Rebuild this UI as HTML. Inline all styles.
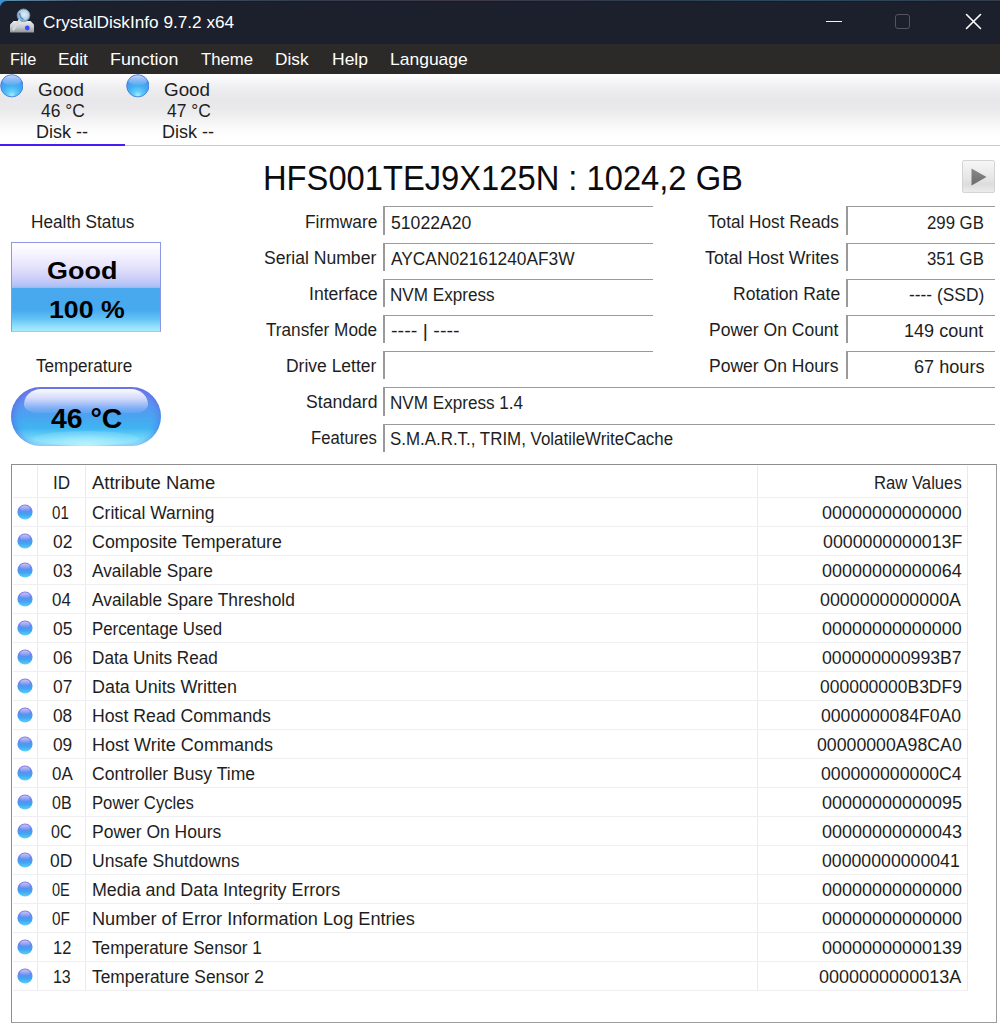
<!DOCTYPE html>
<html><head><meta charset="utf-8"><title>CrystalDiskInfo</title>
<style>
html,body{margin:0;padding:0}
body{width:1000px;height:1026px;position:relative;overflow:hidden;background:#fff;font-family:"Liberation Sans",sans-serif;color:#000}
.t{position:absolute;white-space:nowrap;line-height:1;transform-origin:0 0}
.b{position:absolute}
.fld{position:absolute;border-top:1.8px solid #9a9a9a;border-left:2px solid #9a9a9a;box-sizing:border-box;background:#fff}
.hl{position:absolute;height:1px;background:#efeff2;left:13px;width:954px}
.vl{position:absolute;width:1px;background:#e9e9ee;top:466px;height:525px}
</style></head><body>

<div class="b" style="left:0;top:0;width:1000px;height:10px;background:linear-gradient(90deg,#3f8fd6 0,#5b8aa8 1.2%,#46596c 8%,#343e4e 30%,#40394a 47%,#323c4c 60%,#2c4a60 80%,#343e4e 100%)"></div>
<div class="b" style="left:0;top:1px;width:1000px;height:43px;background:#1b202c;border-top-left-radius:7px;border-top:1px solid #141c28;box-sizing:border-box"></div>
<div class="b" style="left:0;top:44px;width:1000px;height:30px;background:#2b2a29"></div>
<svg class="b" style="left:8px;top:7px" width="30" height="30" viewBox="0 0 30 30">
<defs><linearGradient id="ig" x1="0" y1="0" x2="0" y2="1"><stop offset="0" stop-color="#eceef0"/><stop offset="0.55" stop-color="#c4c8cc"/><stop offset="1" stop-color="#8e949c"/></linearGradient>
<radialGradient id="il" cx="0.55" cy="0.45" r="0.6"><stop offset="0" stop-color="#e6edf3"/><stop offset="0.6" stop-color="#b9cfe2"/><stop offset="1" stop-color="#5b93c4"/></radialGradient></defs>
<path d="M5.5 14 L22.5 14 L26 17.5 L26 25.6 L2 25.6 L2 17.5 Z" fill="url(#ig)"/>
<circle cx="15.5" cy="8.3" r="6.3" fill="url(#il)" stroke="#6c9cc6" stroke-width="0.9"/>
<path d="M11.5 6 Q12 11 15.5 12.5" stroke="#3f7fb8" stroke-width="1.6" fill="none" opacity=".8"/>
<path d="M11.2 13.2 L5.5 22.5" stroke="#d6dadd" stroke-width="2.2" stroke-linecap="round"/>
<circle cx="19.3" cy="21" r="2.4" fill="#3d48ff"/>
</svg>
<div class="t" id="title" style="left:43.39px;top:14px;font-size:17px;color:#fff;transform:scaleX(1.0117);">CrystalDiskInfo 9.7.2 x64</div>
<div class="b" style="left:826px;top:20.5px;width:15.5px;height:1.4px;background:#f4f4f4"></div>
<div class="b" style="left:895px;top:14px;width:15px;height:15px;border:1.5px solid #50555f;border-radius:3px;box-sizing:border-box"></div>
<svg class="b" style="left:965px;top:13px" width="17" height="17" viewBox="0 0 17 17"><path d="M1.5 1.5 L15.5 15.5 M15.5 1.5 L1.5 15.5" stroke="#fff" stroke-width="1.6" stroke-linecap="round"/></svg>
<div class="t" id="m_File" style="left:9.99px;top:51px;font-size:17px;color:#fff;transform:scaleX(0.9612);">File</div>
<div class="t" id="m_Edit" style="left:58.18px;top:51px;font-size:17px;color:#fff;transform:scaleX(1.0220);">Edit</div>
<div class="t" id="m_Function" style="left:110.14px;top:51px;font-size:17px;color:#fff;transform:scaleX(1.0493);">Function</div>
<div class="t" id="m_Theme" style="left:201.18px;top:51px;font-size:17px;color:#fff;transform:scaleX(0.9832);">Theme</div>
<div class="t" id="m_Disk" style="left:275.19px;top:51px;font-size:17px;color:#fff;transform:scaleX(1.0159);">Disk</div>
<div class="t" id="m_Help" style="left:331.99px;top:51px;font-size:17px;color:#fff;transform:scaleX(1.0294);">Help</div>
<div class="t" id="m_Language" style="left:390.16px;top:51px;font-size:17px;color:#fff;transform:scaleX(1.0284);">Language</div>
<div class="b" style="left:0;top:74px;width:1000px;height:71px;background:linear-gradient(180deg,#ffffff 0,#f7f7f8 9%,#ededef 22%,#e8e8ea 36%,#e9e9eb 48%,#f1f1f2 62%,#fafafa 76%,#ffffff 90%,#ffffff 100%)"></div>
<div class="b" style="left:0;top:144.5px;width:1000px;height:1.5px;background:#cbcbcb"></div>
<div class="b" style="left:0;top:143.5px;width:125px;height:2.5px;background:#4a1cf5"></div>
<svg class="b" style="left:-0.4px;top:74.1px" width="23.6" height="23.6" viewBox="0 0 24 24">
<defs><radialGradient id="o1a" cx="0.5" cy="0.92" r="0.85"><stop offset="0" stop-color="#a6ecff"/><stop offset="0.22" stop-color="#62cdf8"/><stop offset="0.5" stop-color="#45b0f2"/><stop offset="1" stop-color="#4a8cec"/></radialGradient>
<linearGradient id="o1b" x1="0" y1="0" x2="0" y2="1"><stop offset="0" stop-color="#f4eeff" stop-opacity="0.95"/><stop offset="0.55" stop-color="#e0e6ff" stop-opacity="0.45"/><stop offset="1" stop-color="#ffffff" stop-opacity="0"/></linearGradient>
<clipPath id="o1c"><circle cx="12" cy="12" r="10.8"/></clipPath></defs>
<circle cx="12" cy="12" r="11.3" fill="url(#o1a)" stroke="#3f7cdc" stroke-width="0.9"/><ellipse cx="12" cy="5.2" rx="10.5" ry="6.6" fill="url(#o1b)" clip-path="url(#o1c)"/></svg>
<svg class="b" style="left:125.6px;top:74.1px" width="23.6" height="23.6" viewBox="0 0 24 24">
<defs><radialGradient id="o2a" cx="0.5" cy="0.92" r="0.85"><stop offset="0" stop-color="#a6ecff"/><stop offset="0.22" stop-color="#62cdf8"/><stop offset="0.5" stop-color="#45b0f2"/><stop offset="1" stop-color="#4a8cec"/></radialGradient>
<linearGradient id="o2b" x1="0" y1="0" x2="0" y2="1"><stop offset="0" stop-color="#f4eeff" stop-opacity="0.95"/><stop offset="0.55" stop-color="#e0e6ff" stop-opacity="0.45"/><stop offset="1" stop-color="#ffffff" stop-opacity="0"/></linearGradient>
<clipPath id="o2c"><circle cx="12" cy="12" r="10.8"/></clipPath></defs>
<circle cx="12" cy="12" r="11.3" fill="url(#o2a)" stroke="#3f7cdc" stroke-width="0.9"/><ellipse cx="12" cy="5.2" rx="10.5" ry="6.6" fill="url(#o2b)" clip-path="url(#o2c)"/></svg>
<div class="t" id="tb0a" style="left:38.14px;top:82px;font-size:17.5px;color:#1e1e1e;transform:scaleX(1.0758);">Good</div>
<div class="t" id="tb0b" style="left:40.58px;top:103px;font-size:17.5px;color:#1e1e1e;transform:scaleX(0.9960);">46 °C</div>
<div class="t" id="tb0c" style="left:35.58px;top:124px;font-size:17.5px;color:#1e1e1e;transform:scaleX(1.0286);">Disk --</div>
<div class="t" id="tb1a" style="left:164.14px;top:82px;font-size:17.5px;color:#1e1e1e;transform:scaleX(1.0758);">Good</div>
<div class="t" id="tb1b" style="left:166.58px;top:103px;font-size:17.5px;color:#1e1e1e;transform:scaleX(0.9960);">47 °C</div>
<div class="t" id="tb1c" style="left:161.58px;top:124px;font-size:17.5px;color:#1e1e1e;transform:scaleX(1.0286);">Disk --</div>
<div class="t" id="model" style="left:263.16px;top:160px;font-size:35px;color:#0c0c0c;transform:scaleX(0.9343);">HFS001TEJ9X125N : 1024,2 GB</div>
<div class="b" style="left:962px;top:160px;width:33px;height:33px;box-sizing:border-box;border:1px solid #d4d4d4;border-radius:2px;background:linear-gradient(180deg,#f6f6f6 0,#e6e6e6 55%,#dcdcdc 75%,#ececec 100%)"></div>
<svg class="b" style="left:962px;top:160px" width="33" height="33" viewBox="0 0 33 33"><defs><linearGradient id="pg" x1="0" y1="0" x2="0" y2="1"><stop offset="0" stop-color="#8a8a8a"/><stop offset="1" stop-color="#6a6a6a"/></linearGradient></defs><path d="M9.5 8.5 L24.5 17 L9.5 25.5 Z" fill="url(#pg)"/></svg>
<div class="t" id="hs" style="left:31.02px;top:214px;font-size:17.5px;color:#1e1e1e;transform:scaleX(0.9837);">Health Status</div>
<div class="b" style="left:11.2px;top:242.3px;width:149.6px;height:89.3px;box-sizing:border-box;border:1px solid #8d97e4;border-bottom-color:#86d4f6;background:linear-gradient(180deg,#ffffff 0,#f6f4ff 12%,#e4e1fc 28%,#cccef9 40%,#b3c3f7 48%,#9dbef5 50.5%,#49a8ee 51.5%,#47a9ef 76%,#62c2f5 86%,#94e0fb 95%,#a8eaff 100%)"></div>
<div class="t" id="good" style="left:46.74px;top:259px;font-size:24px;color:#000;font-weight:bold;transform:scaleX(1.1231);">Good</div>
<div class="t" id="pct" style="left:49.41px;top:298px;font-size:24px;color:#000;font-weight:bold;transform:scaleX(1.1121);">100 %</div>
<div class="t" id="tl" style="left:36.00px;top:358px;font-size:17.5px;color:#1e1e1e;transform:scaleX(0.9796);">Temperature</div>
<div class="b" style="left:11px;top:386.5px;width:150px;height:59.5px;border-radius:30px;background:linear-gradient(180deg,#7078e6 0,#6a82ec 10%,#5a96f0 30%,#48a6f0 52%,#40b4f2 70%,#6fd6f8 86%,#a6eefe 100%);overflow:hidden">
<div style="position:absolute;left:0;top:0;width:150px;height:59.5px;border-radius:30px;box-shadow:inset 5px 0 7px -3px rgba(90,100,230,.75),inset -5px 0 7px -3px rgba(90,100,230,.6)"></div>
<div style="position:absolute;left:13px;top:2.5px;width:124px;height:24px;border-radius:20px 20px 16px 16px / 18px 18px 10px 10px;background:linear-gradient(180deg,rgba(255,255,255,.97) 0,rgba(238,238,255,.8) 40%,rgba(205,215,255,.35) 80%,rgba(190,210,255,.12) 100%)"></div>
<div style="position:absolute;left:22px;top:44px;width:106px;height:15px;border-radius:50%;background:radial-gradient(ellipse at 50% 90%,rgba(190,246,255,.85) 0,rgba(170,236,255,.35) 55%,rgba(160,230,255,0) 100%)"></div></div>
<div class="t" id="temp" style="left:50.59px;top:404px;font-size:28.5px;color:#000;font-weight:bold;transform:scaleX(0.9972);">46 °C</div>
<div class="fld" style="left:383.25px;top:206.3px;width:269.6px;height:28.3px"></div>
<div class="t" id="l0" style="left:305.19px;top:214px;font-size:17.5px;color:#1e1e1e;transform:scaleX(0.9932);">Firmware</div>
<div class="t" id="v0" style="left:391.19px;top:215px;font-size:17.5px;color:#1e1e1e;transform:scaleX(1.0064);">51022A20</div>
<div class="fld" style="left:383.25px;top:242.5px;width:269.6px;height:28.3px"></div>
<div class="t" id="l1" style="left:264.00px;top:250px;font-size:17.5px;color:#1e1e1e;transform:scaleX(1.0036);">Serial Number</div>
<div class="t" id="v1" style="left:391.19px;top:251px;font-size:17.5px;color:#1e1e1e;transform:scaleX(0.9898);">AYCAN02161240AF3W</div>
<div class="fld" style="left:383.25px;top:278.7px;width:269.6px;height:28.3px"></div>
<div class="t" id="l2" style="left:308.99px;top:286px;font-size:17.5px;color:#1e1e1e;transform:scaleX(1.0061);">Interface</div>
<div class="t" id="v2" style="left:390.21px;top:287px;font-size:17.5px;color:#1e1e1e;transform:scaleX(0.9774);">NVM Express</div>
<div class="fld" style="left:383.25px;top:314.9px;width:269.6px;height:28.3px"></div>
<div class="t" id="l3" style="left:265.99px;top:322px;font-size:17.5px;color:#1e1e1e;transform:scaleX(0.9814);">Transfer Mode</div>
<div class="t" id="v3" style="left:391.11px;top:323px;font-size:17.5px;color:#1e1e1e;transform:scaleX(1.1268);">---- | ----</div>
<div class="fld" style="left:383.25px;top:351.1px;width:269.6px;height:28.3px"></div>
<div class="t" id="l4" style="left:286.00px;top:358px;font-size:17.5px;color:#1e1e1e;transform:scaleX(0.9989);">Drive Letter</div>
<div class="fld" style="left:383.25px;top:387.3px;width:611.5px;height:28.3px"></div>
<div class="t" id="l5" style="left:305.99px;top:394px;font-size:17.5px;color:#1e1e1e;transform:scaleX(1.0058);">Standard</div>
<div class="t" id="v5" style="left:390.21px;top:395px;font-size:17.5px;color:#1e1e1e;transform:scaleX(0.9778);">NVM Express 1.4</div>
<div class="fld" style="left:383.25px;top:423.5px;width:611.5px;height:28.3px"></div>
<div class="t" id="l6" style="left:311.02px;top:430px;font-size:17.5px;color:#1e1e1e;transform:scaleX(0.9545);">Features</div>
<div class="t" id="v6" style="left:390.22px;top:431px;font-size:17.5px;color:#1e1e1e;transform:scaleX(0.9658);">S.M.A.R.T., TRIM, VolatileWriteCache</div>
<div class="fld" style="left:846px;top:206.3px;width:148.8px;height:28.3px"></div>
<div class="t" id="rl0" style="left:708.38px;top:214px;font-size:17.5px;color:#1e1e1e;transform:scaleX(0.9822);">Total Host Reads</div>
<div class="t" id="rv0" style="left:927.39px;top:215px;font-size:17.5px;color:#1e1e1e;transform:scaleX(0.9577);">299 GB</div>
<div class="fld" style="left:846px;top:242.5px;width:148.8px;height:28.3px"></div>
<div class="t" id="rl1" style="left:705.00px;top:250px;font-size:17.5px;color:#1e1e1e;transform:scaleX(1.0144);">Total Host Writes</div>
<div class="t" id="rv1" style="left:927.39px;top:251px;font-size:17.5px;color:#1e1e1e;transform:scaleX(0.9577);">351 GB</div>
<div class="fld" style="left:846px;top:278.7px;width:148.8px;height:28.3px"></div>
<div class="t" id="rl2" style="left:732.59px;top:286px;font-size:17.5px;color:#1e1e1e;transform:scaleX(1.0019);">Rotation Rate</div>
<div class="t" id="rv2" style="left:909.20px;top:287px;font-size:17.5px;color:#1e1e1e;transform:scaleX(0.9920);">---- (SSD)</div>
<div class="fld" style="left:846px;top:314.9px;width:148.8px;height:28.3px"></div>
<div class="t" id="rl3" style="left:709.39px;top:322px;font-size:17.5px;color:#1e1e1e;transform:scaleX(1.0008);">Power On Count</div>
<div class="t" id="rv3" style="left:904.16px;top:323px;font-size:17.5px;color:#1e1e1e;transform:scaleX(1.0316);">149 count</div>
<div class="fld" style="left:846px;top:351.1px;width:148.8px;height:28.3px"></div>
<div class="t" id="rl4" style="left:709.39px;top:358px;font-size:17.5px;color:#1e1e1e;transform:scaleX(1.0008);">Power On Hours</div>
<div class="t" id="rv4" style="left:914.20px;top:359px;font-size:17.5px;color:#1e1e1e;transform:scaleX(1.0354);">67 hours</div>
<div class="b" style="left:11px;top:464px;width:985.6px;height:558.6px;box-sizing:border-box;border:1.5px solid #8e8e8e;border-right-color:#9c9c9c;border-bottom-color:#9c9c9c"></div>
<div class="vl" style="left:37px"></div><div class="vl" style="left:85px"></div><div class="vl" style="left:757px"></div><div class="vl" style="left:967px"></div>
<div class="t" id="hid" style="left:53.19px;top:475px;font-size:17.5px;color:#1e1e1e;transform:scaleX(0.9769);">ID</div>
<div class="t" id="hname" style="left:92.02px;top:475px;font-size:17.5px;color:#1e1e1e;transform:scaleX(1.0556);">Attribute Name</div>
<div class="t" id="hraw" style="left:873.85px;top:475px;font-size:17.5px;color:#1e1e1e;transform:scaleX(0.9528);">Raw Values</div>
<div class="hl" style="top:497px"></div>
<svg width="0" height="0" style="position:absolute"><defs><linearGradient id="sg" x1="0" y1="0" x2="0" y2="1"><stop offset="0" stop-color="#8a78e6"/><stop offset="0.3" stop-color="#6b86ee"/><stop offset="0.65" stop-color="#3fa3f2"/><stop offset="1" stop-color="#5fd0fa"/></linearGradient>
<linearGradient id="sh" x1="0" y1="0" x2="0" y2="1"><stop offset="0" stop-color="#fff" stop-opacity="0.55"/><stop offset="1" stop-color="#fff" stop-opacity="0"/></linearGradient></defs></svg>
<svg class="b" style="left:17px;top:503.5px" width="16" height="16" viewBox="0 0 16 16"><circle cx="8" cy="8" r="7.6" fill="url(#sg)"/><ellipse cx="8" cy="4.6" rx="5" ry="3" fill="url(#sh)"/></svg>
<div class="t" id="a0id" style="left:52.06px;top:505px;font-size:17.5px;color:#1e1e1e;transform:scaleX(0.8635);">01</div>
<div class="t" id="a0n" style="left:92.40px;top:505px;font-size:17.5px;color:#1e1e1e;transform:scaleX(0.9967);">Critical Warning</div>
<div class="t" id="a0r" style="left:822.40px;top:505px;font-size:17.5px;color:#1e1e1e;transform:scaleX(1.0257);">00000000000000</div>
<div class="hl" style="top:526px"></div>
<svg class="b" style="left:17px;top:532.5px" width="16" height="16" viewBox="0 0 16 16"><circle cx="8" cy="8" r="7.6" fill="url(#sg)"/><ellipse cx="8" cy="4.6" rx="5" ry="3" fill="url(#sh)"/></svg>
<div class="t" id="a1id" style="left:52.59px;top:534px;font-size:17.5px;color:#1e1e1e;transform:scaleX(0.9930);">02</div>
<div class="t" id="a1n" style="left:92.39px;top:534px;font-size:17.5px;color:#1e1e1e;transform:scaleX(1.0188);">Composite Temperature</div>
<div class="t" id="a1r" style="left:822.59px;top:534px;font-size:17.5px;color:#1e1e1e;transform:scaleX(1.0153);">0000000000013F</div>
<div class="hl" style="top:555px"></div>
<svg class="b" style="left:17px;top:561.5px" width="16" height="16" viewBox="0 0 16 16"><circle cx="8" cy="8" r="7.6" fill="url(#sg)"/><ellipse cx="8" cy="4.6" rx="5" ry="3" fill="url(#sh)"/></svg>
<div class="t" id="a2id" style="left:52.59px;top:563px;font-size:17.5px;color:#1e1e1e;transform:scaleX(0.9930);">03</div>
<div class="t" id="a2n" style="left:92.38px;top:563px;font-size:17.5px;color:#1e1e1e;transform:scaleX(0.9877);">Available Spare</div>
<div class="t" id="a2r" style="left:822.40px;top:563px;font-size:17.5px;color:#1e1e1e;transform:scaleX(1.0257);">00000000000064</div>
<div class="hl" style="top:584px"></div>
<svg class="b" style="left:17px;top:590.5px" width="16" height="16" viewBox="0 0 16 16"><circle cx="8" cy="8" r="7.6" fill="url(#sg)"/><ellipse cx="8" cy="4.6" rx="5" ry="3" fill="url(#sh)"/></svg>
<div class="t" id="a3id" style="left:51.80px;top:592px;font-size:17.5px;color:#1e1e1e;transform:scaleX(0.9651);">04</div>
<div class="t" id="a3n" style="left:92.39px;top:592px;font-size:17.5px;color:#1e1e1e;transform:scaleX(0.9913);">Available Spare Threshold</div>
<div class="t" id="a3r" style="left:820.00px;top:592px;font-size:17.5px;color:#1e1e1e;transform:scaleX(1.0203);">0000000000000A</div>
<div class="hl" style="top:613px"></div>
<svg class="b" style="left:17px;top:619.5px" width="16" height="16" viewBox="0 0 16 16"><circle cx="8" cy="8" r="7.6" fill="url(#sg)"/><ellipse cx="8" cy="4.6" rx="5" ry="3" fill="url(#sh)"/></svg>
<div class="t" id="a4id" style="left:52.59px;top:621px;font-size:17.5px;color:#1e1e1e;transform:scaleX(0.9930);">05</div>
<div class="t" id="a4n" style="left:91.82px;top:621px;font-size:17.5px;color:#1e1e1e;transform:scaleX(0.9620);">Percentage Used</div>
<div class="t" id="a4r" style="left:822.40px;top:621px;font-size:17.5px;color:#1e1e1e;transform:scaleX(1.0257);">00000000000000</div>
<div class="hl" style="top:642px"></div>
<svg class="b" style="left:17px;top:648.5px" width="16" height="16" viewBox="0 0 16 16"><circle cx="8" cy="8" r="7.6" fill="url(#sg)"/><ellipse cx="8" cy="4.6" rx="5" ry="3" fill="url(#sh)"/></svg>
<div class="t" id="a5id" style="left:52.59px;top:650px;font-size:17.5px;color:#1e1e1e;transform:scaleX(0.9930);">06</div>
<div class="t" id="a5n" style="left:91.80px;top:650px;font-size:17.5px;color:#1e1e1e;transform:scaleX(0.9796);">Data Units Read</div>
<div class="t" id="a5r" style="left:822.39px;top:650px;font-size:17.5px;color:#1e1e1e;transform:scaleX(1.0109);">000000000993B7</div>
<div class="hl" style="top:671px"></div>
<svg class="b" style="left:17px;top:677.5px" width="16" height="16" viewBox="0 0 16 16"><circle cx="8" cy="8" r="7.6" fill="url(#sg)"/><ellipse cx="8" cy="4.6" rx="5" ry="3" fill="url(#sh)"/></svg>
<div class="t" id="a6id" style="left:52.59px;top:679px;font-size:17.5px;color:#1e1e1e;transform:scaleX(0.9930);">07</div>
<div class="t" id="a6n" style="left:91.77px;top:679px;font-size:17.5px;color:#1e1e1e;transform:scaleX(1.0229);">Data Units Written</div>
<div class="t" id="a6r" style="left:820.00px;top:679px;font-size:17.5px;color:#1e1e1e;transform:scaleX(0.9986);">000000000B3DF9</div>
<div class="hl" style="top:700px"></div>
<svg class="b" style="left:17px;top:706.5px" width="16" height="16" viewBox="0 0 16 16"><circle cx="8" cy="8" r="7.6" fill="url(#sg)"/><ellipse cx="8" cy="4.6" rx="5" ry="3" fill="url(#sh)"/></svg>
<div class="t" id="a7id" style="left:52.57px;top:708px;font-size:17.5px;color:#1e1e1e;transform:scaleX(0.9870);">08</div>
<div class="t" id="a7n" style="left:91.78px;top:708px;font-size:17.5px;color:#1e1e1e;transform:scaleX(1.0108);">Host Read Commands</div>
<div class="t" id="a7r" style="left:821.19px;top:708px;font-size:17.5px;color:#1e1e1e;transform:scaleX(1.0066);">0000000084F0A0</div>
<div class="hl" style="top:729px"></div>
<svg class="b" style="left:17px;top:735.5px" width="16" height="16" viewBox="0 0 16 16"><circle cx="8" cy="8" r="7.6" fill="url(#sg)"/><ellipse cx="8" cy="4.6" rx="5" ry="3" fill="url(#sh)"/></svg>
<div class="t" id="a8id" style="left:52.57px;top:737px;font-size:17.5px;color:#1e1e1e;transform:scaleX(0.9870);">09</div>
<div class="t" id="a8n" style="left:91.76px;top:737px;font-size:17.5px;color:#1e1e1e;transform:scaleX(1.0303);">Host Write Commands</div>
<div class="t" id="a8r" style="left:816.78px;top:737px;font-size:17.5px;color:#1e1e1e;transform:scaleX(1.0120);">00000000A98CA0</div>
<div class="hl" style="top:758px"></div>
<svg class="b" style="left:17px;top:764.5px" width="16" height="16" viewBox="0 0 16 16"><circle cx="8" cy="8" r="7.6" fill="url(#sg)"/><ellipse cx="8" cy="4.6" rx="5" ry="3" fill="url(#sh)"/></svg>
<div class="t" id="a9id" style="left:51.60px;top:766px;font-size:17.5px;color:#1e1e1e;transform:scaleX(0.9682);">0A</div>
<div class="t" id="a9n" style="left:92.39px;top:766px;font-size:17.5px;color:#1e1e1e;transform:scaleX(1.0043);">Controller Busy Time</div>
<div class="t" id="a9r" style="left:821.40px;top:766px;font-size:17.5px;color:#1e1e1e;transform:scaleX(1.0108);">000000000000C4</div>
<div class="hl" style="top:787px"></div>
<svg class="b" style="left:17px;top:793.5px" width="16" height="16" viewBox="0 0 16 16"><circle cx="8" cy="8" r="7.6" fill="url(#sg)"/><ellipse cx="8" cy="4.6" rx="5" ry="3" fill="url(#sh)"/></svg>
<div class="t" id="a10id" style="left:52.38px;top:795px;font-size:17.5px;color:#1e1e1e;transform:scaleX(0.9150);">0B</div>
<div class="t" id="a10n" style="left:91.83px;top:795px;font-size:17.5px;color:#1e1e1e;transform:scaleX(0.9519);">Power Cycles</div>
<div class="t" id="a10r" style="left:822.00px;top:795px;font-size:17.5px;color:#1e1e1e;transform:scaleX(1.0280);">00000000000095</div>
<div class="hl" style="top:816px"></div>
<svg class="b" style="left:17px;top:822.5px" width="16" height="16" viewBox="0 0 16 16"><circle cx="8" cy="8" r="7.6" fill="url(#sg)"/><ellipse cx="8" cy="4.6" rx="5" ry="3" fill="url(#sh)"/></svg>
<div class="t" id="a11id" style="left:51.41px;top:824px;font-size:17.5px;color:#1e1e1e;transform:scaleX(0.9167);">0C</div>
<div class="t" id="a11n" style="left:91.79px;top:824px;font-size:17.5px;color:#1e1e1e;transform:scaleX(0.9992);">Power On Hours</div>
<div class="t" id="a11r" style="left:822.00px;top:824px;font-size:17.5px;color:#1e1e1e;transform:scaleX(1.0280);">00000000000043</div>
<div class="hl" style="top:845px"></div>
<svg class="b" style="left:17px;top:851.5px" width="16" height="16" viewBox="0 0 16 16"><circle cx="8" cy="8" r="7.6" fill="url(#sg)"/><ellipse cx="8" cy="4.6" rx="5" ry="3" fill="url(#sh)"/></svg>
<div class="t" id="a12id" style="left:49.74px;top:853px;font-size:17.5px;color:#1e1e1e;transform:scaleX(0.9983);">0D</div>
<div class="t" id="a12n" style="left:91.78px;top:853px;font-size:17.5px;color:#1e1e1e;transform:scaleX(1.0041);">Unsafe Shutdowns</div>
<div class="t" id="a12r" style="left:822.00px;top:853px;font-size:17.5px;color:#1e1e1e;transform:scaleX(1.0110);">00000000000041</div>
<div class="hl" style="top:874px"></div>
<svg class="b" style="left:17px;top:880.5px" width="16" height="16" viewBox="0 0 16 16"><circle cx="8" cy="8" r="7.6" fill="url(#sg)"/><ellipse cx="8" cy="4.6" rx="5" ry="3" fill="url(#sh)"/></svg>
<div class="t" id="a13id" style="left:52.45px;top:882px;font-size:17.5px;color:#1e1e1e;transform:scaleX(0.8289);">0E</div>
<div class="t" id="a13n" style="left:91.77px;top:882px;font-size:17.5px;color:#1e1e1e;transform:scaleX(1.0203);">Media and Data Integrity Errors</div>
<div class="t" id="a13r" style="left:822.00px;top:882px;font-size:17.5px;color:#1e1e1e;transform:scaleX(1.0280);">00000000000000</div>
<div class="hl" style="top:903px"></div>
<svg class="b" style="left:17px;top:909.5px" width="16" height="16" viewBox="0 0 16 16"><circle cx="8" cy="8" r="7.6" fill="url(#sg)"/><ellipse cx="8" cy="4.6" rx="5" ry="3" fill="url(#sh)"/></svg>
<div class="t" id="a14id" style="left:52.43px;top:911px;font-size:17.5px;color:#1e1e1e;transform:scaleX(0.8757);">0F</div>
<div class="t" id="a14n" style="left:91.76px;top:911px;font-size:17.5px;color:#1e1e1e;transform:scaleX(1.0371);">Number of Error Information Log Entries</div>
<div class="t" id="a14r" style="left:822.00px;top:911px;font-size:17.5px;color:#1e1e1e;transform:scaleX(1.0280);">00000000000000</div>
<div class="hl" style="top:932px"></div>
<svg class="b" style="left:17px;top:938.5px" width="16" height="16" viewBox="0 0 16 16"><circle cx="8" cy="8" r="7.6" fill="url(#sg)"/><ellipse cx="8" cy="4.6" rx="5" ry="3" fill="url(#sh)"/></svg>
<div class="t" id="a15id" style="left:53.06px;top:940px;font-size:17.5px;color:#1e1e1e;transform:scaleX(0.9400);">12</div>
<div class="t" id="a15n" style="left:92.38px;top:940px;font-size:17.5px;color:#1e1e1e;transform:scaleX(0.9809);">Temperature Sensor 1</div>
<div class="t" id="a15r" style="left:822.00px;top:940px;font-size:17.5px;color:#1e1e1e;transform:scaleX(1.0280);">00000000000139</div>
<div class="hl" style="top:961px"></div>
<svg class="b" style="left:17px;top:967.5px" width="16" height="16" viewBox="0 0 16 16"><circle cx="8" cy="8" r="7.6" fill="url(#sg)"/><ellipse cx="8" cy="4.6" rx="5" ry="3" fill="url(#sh)"/></svg>
<div class="t" id="a16id" style="left:53.09px;top:969px;font-size:17.5px;color:#1e1e1e;transform:scaleX(0.9115);">13</div>
<div class="t" id="a16n" style="left:92.39px;top:969px;font-size:17.5px;color:#1e1e1e;transform:scaleX(0.9925);">Temperature Sensor 2</div>
<div class="t" id="a16r" style="left:819.38px;top:969px;font-size:17.5px;color:#1e1e1e;transform:scaleX(1.0290);">0000000000013A</div>
<div class="hl" style="top:990px"></div>
</body></html>
